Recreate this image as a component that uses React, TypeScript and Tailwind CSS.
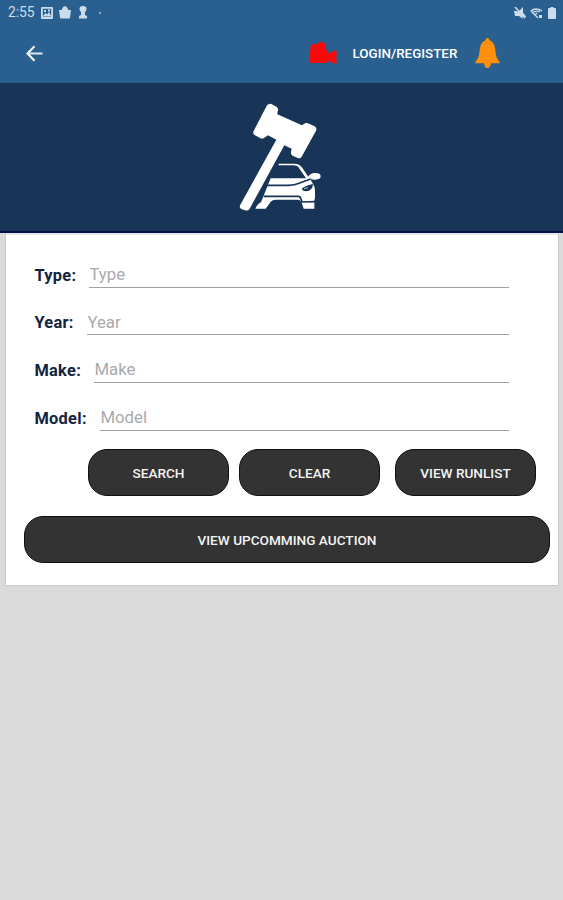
import React from "react";

const fields = [
  { label: "Type", width: "w-[55px]" },
  { label: "Year", width: "w-[53px]" },
  { label: "Make", width: "w-[60px]" },
  { label: "Model", width: "w-[66px]" },
];

function StatusBar() {
  return (
    <div className="flex h-[25px] items-center pl-2 pr-[7px] text-[#cbdcec]">
      <span className="w-[33px] text-[13.8px] leading-none">2:55</span>
      <svg className="h-[12px] w-[12px]" viewBox="0 0 12 12">
        <path fill="currentColor" fillRule="evenodd" d="M1 0h10q1 0 1 1v10q0 1-1 1H1q-1 0-1-1V1q0-1 1-1zM1.8 1.8v7.8h8.4V1.8z" />
        <path fill="currentColor" d="M2 9 4.5 6l1.6 1.6L8 5l2.2 4zM3 3h2v2H3zM7 2.5h2v2H7z" />
      </svg>
      <svg className="ml-[6px] h-[13px] w-[12px]" viewBox="0 0 12 13">
        <path fill="currentColor" d="M0 4h2.5L4 1.2Q6-.8 8 1.2L9.5 4H12l-1 7.5q0 1-1 1H2q-1 0-1-1z" />
      </svg>
      <svg className="ml-[8px] h-[13px] w-[8px]" viewBox="0 0 8 13">
        <path fill="currentColor" d="M.5 2.8Q.5 0 4 0t3.5 2.8Q7.5 5 6 6v3l2 1v2.5H0V10l2-1V6Q.5 5 .5 2.8z" />
      </svg>
      <span className="ml-[12px] h-[2px] w-[2px] rounded-full bg-[#a4c0d9]" />
      <svg className="ml-auto h-[12px] w-[12px]" viewBox="0 0 12 12">
        <path fill="currentColor" d="M0 4h3l1 1 5-5v5.500l3 4-1.500 1.500-2.500-2 1 3-4-3H1z" />
        <path stroke="currentColor" strokeWidth="1.5" d="m1 0 10 11" />
      </svg>
      <svg className="ml-[4px] h-[12px] w-[13px]" viewBox="0 0 13 12">
        <path fill="none" stroke="currentColor" strokeWidth="1.3" d="M.7 4Q6 0 12 4M2 6q4-3 8-1M1 4l7 7M5 8l2-2" />
        <path fill="currentColor" d="M9 8h3v3H9z" />
      </svg>
      <svg className="ml-[5px] h-[12px] w-[8px]" viewBox="0 0 8 12">
        <path fill="currentColor" d="M2.5 0h3v1H7q1 0 1 1v9q0 1-1 1H1q-1 0-1-1V2q0-1 1-1h1.5z" />
      </svg>
    </div>
  );
}

function AppBar() {
  return (
    <div className="flex h-[58px] items-center pb-[2px] text-white">
      <svg className="ml-[26px] h-[17px] w-[17px]" viewBox="0 0 17 17">
        <path fill="none" stroke="#fff" strokeWidth="2" d="M8.5 1.2 1.5 8.5l7 7.3" />
        <path stroke="#e0e8f0" strokeWidth="2" d="M2 8.5h14.5" />
      </svg>
      <svg className="ml-[266px] h-[24px] w-[28px]" viewBox="0 0 28 24">
        <g fill="#fd0808">
          <circle cx="5.5" cy="7.3" r="4.3" />
          <circle cx="12" cy="6" r="5" />
          <rect x=".7" y="9" width="18" height="13" rx="1.8" />
          <path d="M5 6h9v5H5zM17.500 13.500 26.500 9q1 0 1 .8v12.400q0 1-1 .8l-9-4z" />
        </g>
        <circle cx="5.7" cy="7.4" r="1" fill="#8e3247" />
      </svg>
      <span className="ml-[15.5px] w-[107.5px] whitespace-nowrap pt-px text-[13.4px] font-medium leading-none">LOGIN/REGISTER</span>
      <svg className="ml-[15px] h-[30px] w-[25px]" viewBox="0 0 25 30">
        <path fill="#ff900c" d="M10.6 2.3Q10.6 0 12.5 0t1.9 2.3Q19.5 4 20.3 12q.7 8 3.3 10.5 1.4 1 1 2.7H16Q15.5 30 12.5 30T9 25.2H.4q-.4-1.7 1-2.7Q4 20 4.700 12 5.5 4 10.6 2.3z" />
      </svg>
    </div>
  );
}

function AuctionLogo() {
  return (
    <svg className="ml-[225px] h-[130px] w-[110px]" viewBox="0 0 330 390">
      <g fill="#fff">
        <path d="M126 46q5-6 13-4l15 8q8 5 4 14l-1 9 74 33 9-6q6-3 12 1l17 8q8 5 4 13l-43 78q-4 7-12 4l-15-7q-6-4-5-11l2-10-22-10L74 356q-5 8-14 5l-11-4q-8-4-3-13L154 149l-25-13-12 8q-6 3-12 0l-15-8q-8-5-4-13z" />
        <path d="M161 221h46q16 0 23 10l20 29q5-11 20-11 17 0 17 10t-16 10q-10 0-16-3l7 12q8 11 8 24v22l-2 7v25h-32l-7-21q-3-6-11-6h-66q-9 0-15 6l-15 21H91q6-14 17-19l29-72h106l-23-34q-4-5-14-5h-45z" />
      </g>
      <g fill="none" stroke="#183456" strokeWidth="5">
        <path d="M124 286h66q20 0 32-6l35-13" />
        <path d="M116 319h104q6 0 8 8l3 9 39-1" />
      </g>
      <path fill="#183456" d="M230 297q7-9 34-15-1 21-21 22-9 0-13-7z" />
      <path fill="none" stroke="#fff" strokeWidth="2" d="m237 296 12-3" />
    </svg>
  );
}

function PillButton({ className, children }: { className: string; children: React.ReactNode }) {
  return (
    <button className={`h-[47px] rounded-[19px] border border-[#101010] bg-[#333] pt-[2px] font-medium text-[#f3f3f3] ${className}`}>
      {children}
    </button>
  );
}

export default function App() {
  return (
    <main className="h-[900px] w-[563px] overflow-hidden bg-[#dadada] font-['Roboto',sans-serif]">
      <header className="h-[83px] bg-[#2a608f]">
        <StatusBar />
        <AppBar />
      </header>
      <section className="h-[150px] border-b-2 border-[#071047] bg-[#183456] pt-[7px]">
        <AuctionLogo />
      </section>
      <section className="ml-[5px] mr-[4px] h-[353px] rounded-b-[2px] border border-t-2 border-[#c9c9c9] border-t-[#e1e5ee] bg-white pt-[5px]">
        <div className="pl-[28.4px] pr-[49px]">
          {fields.map(({ label, width }) => (
            <label key={label} className="flex h-[47.7px] items-end">
              <span className={`${width} shrink-0 pb-[3px] text-[16.4px] font-bold leading-[19px] tracking-[0.3px] text-[#14243d]`}>{label}:</span>
              <input className="h-[25px] min-w-0 flex-1 border-b border-[#a0a0a0] text-[16.8px] outline-none placeholder:text-[#aaa]" placeholder={label} />
            </label>
          ))}
        </div>
        <div className="mt-[18px] flex pl-[82px] text-[13.6px]">
          <PillButton className="w-[141px]">SEARCH</PillButton>
          <PillButton className="ml-[10px] w-[141px]">CLEAR</PillButton>
          <PillButton className="ml-[15px] w-[141px]">VIEW RUNLIST</PillButton>
        </div>
        <PillButton className="ml-[18px] mt-[20px] w-[526px] text-[13.6px]">VIEW UPCOMMING AUCTION</PillButton>
      </section>
    </main>
  );
}
